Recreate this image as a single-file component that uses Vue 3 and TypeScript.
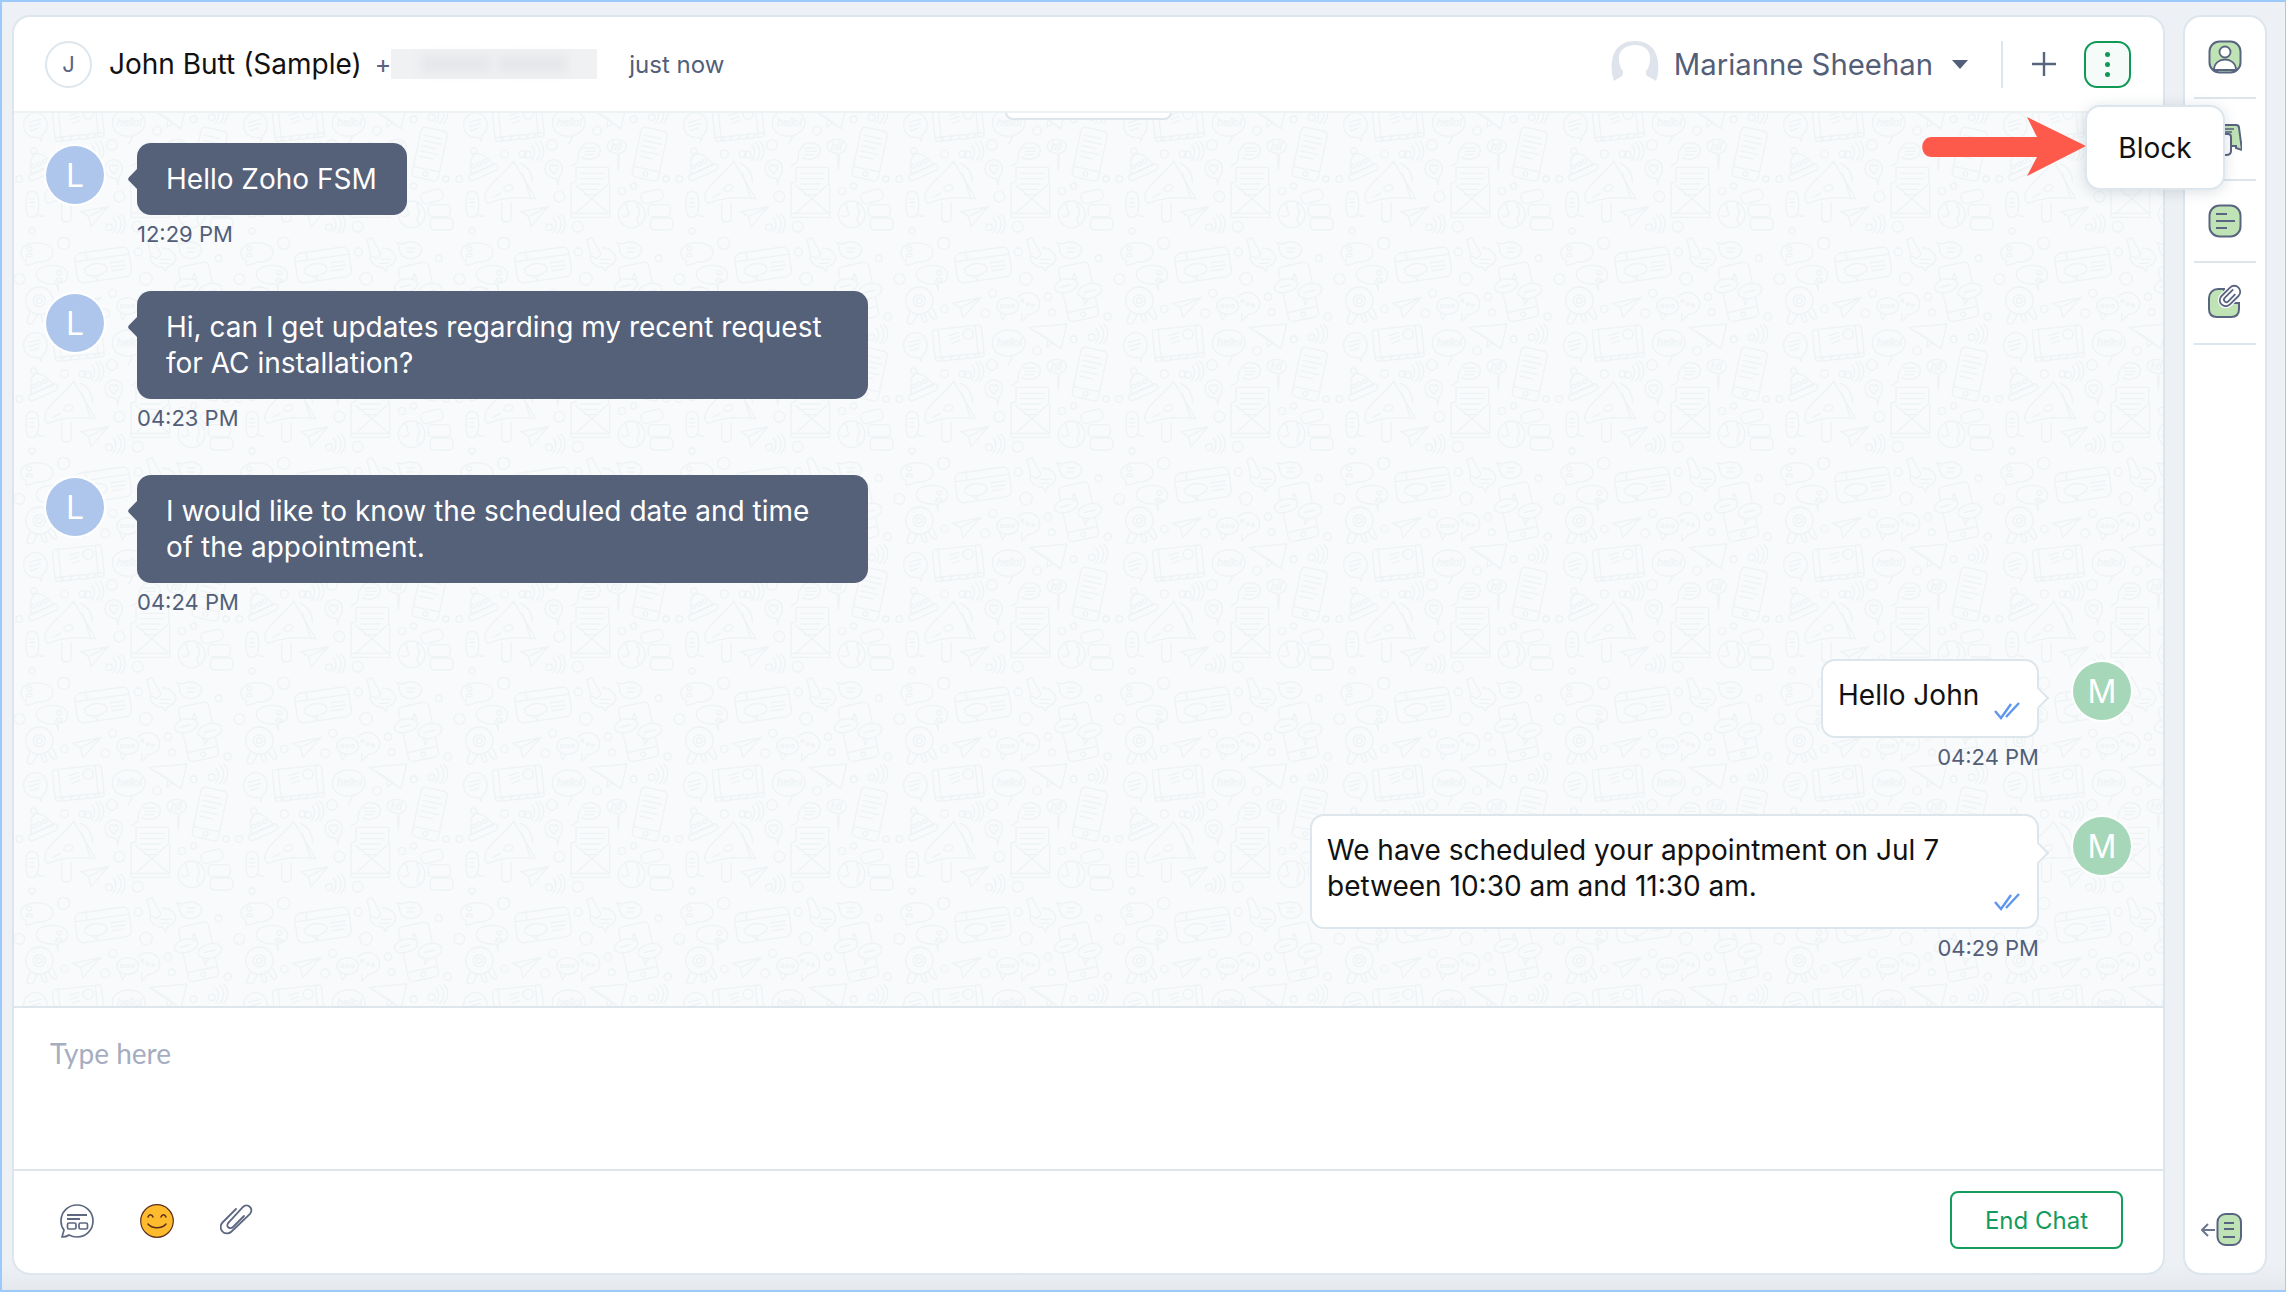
<script setup lang="ts">
interface Message {
  id: number
  side: 'in' | 'out'
  text: string
  time: string
  initial: string
  bubbleClass: string
}

const messages: Message[] = [
  { id: 1, side: 'in', text: 'Hello Zoho FSM', time: '12:29 PM', initial: 'L', bubbleClass: '' },
  {
    id: 2,
    side: 'in',
    text: 'Hi, can I get updates regarding my recent request\nfor AC installation?',
    time: '04:23 PM',
    initial: 'L',
    bubbleClass: 'wide',
  },
  {
    id: 3,
    side: 'in',
    text: 'I would like to know the scheduled date and time\nof the appointment.',
    time: '04:24 PM',
    initial: 'L',
    bubbleClass: 'wide',
  },
  { id: 4, side: 'out', text: 'Hello John', time: '04:24 PM', initial: 'M', bubbleClass: 'short' },
  {
    id: 5,
    side: 'out',
    text: 'We have scheduled your appointment on Jul 7\nbetween 10:30 am and 11:30 am.',
    time: '04:29 PM',
    initial: 'M',
    bubbleClass: 'long',
  },
]

// small circles of the wallpaper tile: x, y, r
const dots: [number, number, number][] = [
  [518, 118, 10], [408, 152, 13], [130, 222, 12], [185, 222, 10], [273, 195, 16], [295, 350, 16],
  [483, 333, 11], [518, 318, 9], [615, 297, 9], [655, 297, 10], [350, 440, 16], [33, 453, 9],
  [128, 490, 18], [352, 516, 12], [375, 596, 19], [593, 535, 10], [655, 597, 16], [130, 687, 11],
  [275, 640, 12], [253, 700, 13], [441, 650, 11], [452, 697, 10], [620, 710, 11],
]
</script>

<template>
  <div class="page">
    <main class="panel">
      <header class="head">
        <span class="contact-avatar">J</span>
        <span class="contact-name">John Butt (Sample)</span>
        <span class="plus-sign">+</span>
        <span class="blurred"><i></i><i></i></span>
        <span class="last-seen">just now</span>

        <div class="head-right">
          <svg class="agent-pic" viewBox="0 0 48 40">
            <path d="M3 40C-2 26-1 0 24 0s26 26 21 40c-2-2-6-3-9-5-1-2-1-3-1-5 3-3 4-8 4-13 0-8-6-13-15-13S8 9 8 17c0 5 1 10 4 13 0 2 0 3-1 5-2 2-6 3-8 5z" fill="#dfe3ec" />
          </svg>
          <span class="agent-name">Marianne Sheehan</span>
          <span class="caret"></span>
          <span class="divider"></span>
          <svg class="plus-icon" viewBox="0 0 26 26">
            <path d="M13 1v24M1 13h24" stroke="#596480" stroke-width="2.4" fill="none" />
          </svg>
          <button class="kebab" type="button">
            <i></i><i></i><i></i>
          </button>
        </div>
      </header>

      <section class="chat">
        <svg class="wallpaper" width="100%" height="100%">
          <defs>
            <g id="tile-art" fill="none" stroke="#eef3f5" stroke-width="4" stroke-linecap="round" stroke-linejoin="round">
              <circle v-for="(d, i) in dots" :key="i" :cx="d[0]" :cy="d[1]" :r="d[2]" />
              <!-- postcard -->
              <g transform="rotate(-6 170 130)">
                <rect x="98" y="82" width="148" height="96" rx="10" />
                <path d="M116 82v96M228 82v96M98 166h148M116 178l12-12M140 178l12-12M164 178l12-12M188 178l12-12M212 178l12-12" />
                <circle cx="204" cy="106" r="15" />
                <path d="M146 104l30-6M150 116l26-6M154 128l24-6" />
              </g>
              <!-- bubbles, top row -->
              <path d="M60 184c-2-8-4-12-8-12-24 4-44-12-44-36 0-22 16-38 36-38s34 16 34 38c0 16-8 26-14 30-2 6-2 12-4 18z" />
              <path d="M22 128l36-10M24 140l34-10M28 152l24-8" />
              <path d="M322 192c6-6 10-14 10-24-36 4-58-14-58-40 0-22 22-38 50-38s48 16 48 38c0 20-18 34-38 40-2 10-6 18-12 24z" />
              <text x="288" y="138" class="pat-word">hello!</text>
              <path d="M385 82l112-10-17 74-40-30zM385 82l95 64M440 116l-2 26 18-14" />
              <g id="wifi-mark">
                <circle cx="572" cy="112" r="10" />
                <path d="M584 84c12 10 12 30 0 44M596 76c16 14 16 40 0 54M608 72c16 16 16 42 0 58" />
              </g>
              <g transform="rotate(12 565 222)">
                <rect x="526" y="146" width="80" height="152" rx="12" />
                <path d="M526 268h80M538 170h50M538 186h56M538 202h44M538 218h54M538 234h40" />
                <circle cx="566" cy="283" r="7" />
              </g>
              <!-- bell -->
              <g transform="rotate(-24 58 250)">
                <path d="M18 270c8-10 8-44 36-52 28 4 32 40 40 52z" />
                <rect x="8" y="268" width="94" height="20" rx="10" />
                <circle cx="55" cy="208" r="9" />
                <circle cx="36" cy="250" r="6" />
                <circle cx="54" cy="250" r="6" />
                <circle cx="72" cy="250" r="6" />
              </g>
              <use href="#wifi-mark" transform="translate(-372 112)" />
              <path d="M290 315c0-12-4-18-8-20-18-2-30-12-30-28 0-16 12-28 26-28s26 12 26 28c0 12-6 20-10 26-2 8-2 14-4 22z" />
              <path d="M278 282c-10-10-16-16-12-24 4-6 10-4 12 2 2-6 8-8 12-2 4 8-4 14-12 24z" />
              <path d="M330 258c10-4 18-10 22-18-4-20 12-52 34-52 20 0 32 10 32 24s-14 26-32 26c-8 0-16-2-22-6" />
              <path d="M368 204h34M372 214h32M372 224h26" />
              <path d="M472 270c-2-16-2-34-2-50-26-2-32-12-32-22 0-10 12-20 30-20s28 10 28 20c0 10-8 20-20 22-2 16-2 34-4 50z" />
              <text x="450" y="210" class="pat-word">hi!</text>
              <!-- megaphone -->
              <path d="M72 350c0-30 50-60 86-106l66 112c-50-6-104-2-144 14-6-4-8-12-8-20zM178 250c22 10 36 30 36 56M184 280l26 76" />
              <ellipse cx="142" cy="324" rx="14" ry="9" transform="rotate(-20 142 324)" />
              <path d="M96 352l22-12M122 368v46c0 16 28 16 28 0v-46" />
              <!-- envelope -->
              <path d="M330 412V310l15-6v-42h98v46l3 4v100zM330 400h116M344 400l100-90M344 316l100 84" />
              <path d="M358 280h72M358 296h72M358 312h60M358 328h52M370 344h40" />
              <path d="M33 334c14 0 20 8 20 38 0 30-6 40-20 40s-18-10-18-40c0-30 4-38 18-38zM53 404c4 6 10 6 16 4M26 356h14M26 368h14M26 380h14" />
              <path d="M180 395l82-15-52 60-8-30zM180 395l82-15M202 410l60-30" />
              <use href="#wifi-mark" transform="translate(-308 330)" />
              <!-- globe -->
              <circle cx="512" cy="403" r="40" />
              <path d="M490 370c14 8 4 18 12 26s-14 20-20 10M530 368c-8 16 12 18 4 34s-8 22 2 30" />
              <rect x="540" y="332" width="66" height="34" rx="14" transform="rotate(-14 573 349)" />
              <rect x="562" y="374" width="66" height="36" rx="12" />
              <rect x="568" y="414" width="68" height="36" rx="12" />
              <!-- bottom half -->
              <path d="M16 556l-2-16c-10-4-14-14-14-22 0-18 22-30 48-30s48 12 48 30-22 30-48 28c-10 6-20 8-32 10z" />
              <circle cx="25" cy="506" r="7" />
              <path d="M16 530c0-12 18-12 18 0z" />
              <path d="M112 632l-6-20c-30 2-60-8-60-28 0-18 22-28 48-28s46 12 46 28c0 16-14 24-28 26z" />
              <circle cx="115" cy="578" r="7" />
              <path d="M104 604c0-12 20-12 20 0z" />
              <g transform="rotate(-8 245 553)">
                <rect x="164" y="510" width="164" height="90" rx="20" />
                <path d="M164 534h164M200 510v24" />
                <ellipse cx="222" cy="566" rx="34" ry="18" />
                <path d="M210 584l14 14 0-14M270 552h42M270 564h42M270 576h36" />
              </g>
              <path d="M378 480l14-8 28 50-12 14-18-8zM388 526c-4 20 14 36 38 36l8 14 4-14c14-6 26-16 26-28 0-16-18-30-40-30" />
              <path d="M420 538h30M416 550h28" />
              <path d="M466 488l18 4c6-4 14-6 24-6 18 0 34 10 34 24s-16 26-34 26-32-12-32-26c0-8-2-16-10-22zM498 504h24M498 516h20" />
              <!-- phone with bubbles -->
              <g transform="rotate(-12 530 633)">
                <rect x="486" y="552" width="92" height="168" rx="14" />
                <path d="M486 690h92" />
                <circle cx="532" cy="705" r="7" />
              </g>
              <ellipse cx="495" cy="617" rx="36" ry="20" transform="rotate(-14 495 617)" fill="#f8fafb" />
              <ellipse cx="567" cy="633" rx="36" ry="22" transform="rotate(-14 567 633)" fill="#f8fafb" />
              <path d="M478 622l30-8M550 638l32-8M510 598c6-2 8-8 8-18 6 6 8 14 8 24M548 652l4 22 10-18" />
              <!-- webcam -->
              <circle cx="55" cy="662" r="41" />
              <circle cx="55" cy="662" r="18" />
              <circle cx="55" cy="662" r="8" />
              <path d="M28 694l-10 30c0 8 14 10 18 4l14-26M60 704l4 18c2 6 12 6 14 0l-8-22M80 694l16 22c6 6 14-2 10-8l-10-22" />
              <path d="M155 670l85-18-54 60-8-30zM155 670l85-18M176 684l64-32" />
              <ellipse cx="320" cy="678" rx="33" ry="25" />
              <path d="M298 700l6 20 12-16" />
              <circle cx="304" cy="678" r="5" />
              <circle cx="320" cy="678" r="5" />
              <circle cx="336" cy="678" r="5" />
              <path d="M352 650c8-8 18-12 28-12 20 0 36 14 36 34 0 18-14 30-34 32l-20 20 0-24" />
              <circle cx="364" cy="662" r="4" />
              <circle cx="380" cy="672" r="4" />
              <circle cx="396" cy="676" r="4" />
            </g>
            <pattern id="chat-tile" patternUnits="userSpaceOnUse" width="220" height="220" x="7" y="187">
              <g transform="scale(0.33333)">
                <use href="#tile-art" />
                <use href="#tile-art" y="-660" />
                <use href="#tile-art" x="-660" />
                <use href="#tile-art" x="660" />
              </g>
            </pattern>
          </defs>
          <rect width="100%" height="100%" fill="url(#chat-tile)" />
        </svg>

        <span class="day-chip"></span>

        <div
          v-for="m in messages"
          :key="m.id"
          class="row"
          :class="m.side"
        >
          <span class="avatar" :class="m.side">{{ m.initial }}</span>
          <div class="msg">
            <div class="bubble" :class="[m.side, m.bubbleClass]">
              {{ m.text }}
              <svg v-if="m.side === 'out'" class="ticks" viewBox="0 0 27 18">
                <path d="M1 9l6 7L17 2M12 15L25 1" fill="none" stroke="#5e97ec" stroke-width="2.400" />
              </svg>
            </div>
            <div class="time">{{ m.time }}</div>
          </div>
        </div>
      </section>

      <div class="composer">Type here</div>

      <footer class="foot">
        <div class="tools">
          <svg class="tool" viewBox="0 0 34 34" fill="none" stroke="#5d6880" stroke-width="1.700">
            <path d="M2 33l2-7C1.800 23.400 1 20.500 1 17 1 8 8 1 17 1s16 7 16 16-7 16-16 16c-3 0-5.500-.6-8-2-2 1.500-4 2-7 2z" />
            <path d="M7 11h20M7 15h13" stroke-width="2" />
            <rect x="7.500" y="19" width="8.500" height="6" rx="1.500" />
            <rect x="19" y="19" width="8.500" height="6" rx="1.500" />
          </svg>
          <svg class="tool" viewBox="0 0 34 34" fill="none">
            <circle cx="17" cy="17" r="16.300" fill="#fdbb2d" stroke="#5a2f1d" stroke-width="1.200" />
            <path d="M8 13c1-3 4-3 5 0M21 13c1-3 4-3 5 0M8 20c4 5 14 5 18 0" stroke="#5a2f1d" stroke-width="1.500" stroke-linecap="round" />
          </svg>
          <svg class="tool" viewBox="0 0 34 34" fill="none" stroke="#5d6880" stroke-width="1.800" stroke-linecap="round">
            <path d="M16 5L3 18c-3 3-3 6-1 9s7 3 9 1L30 10c2-3 2-5 0-7s-5-2-7 0L9 18c-2 2-2 4-1 5s3 2 5 0L24 12" />
          </svg>
        </div>
        <button class="end-chat" type="button">End Chat</button>
      </footer>
    </main>

    <aside class="side">
      <div class="side-item">
        <svg class="side-icon" viewBox="0 0 34 34">
          <rect x="1.500" y="1.500" width="31" height="31" rx="10" fill="#bfe3b4" stroke="#596480" stroke-width="2" />
          <circle cx="17" cy="12" r="5.500" fill="#fff" stroke="#596480" stroke-width="1.800" />
          <path d="M6 30c0-14 22-14 22 0z" fill="#fff" stroke="#596480" stroke-width="1.800" />
        </svg>
      </div>
      <div class="side-item">
        <svg class="side-icon" viewBox="0 0 34 34">
          <path d="M8 3h20c2 0 3 1 3 3l3 22-6-2v-2H8z" fill="#bfe3b4" stroke="#596480" stroke-width="2" />
          <path d="M6 12h14c2 0 3 1 3 3v14c0 3-2 4-5 4H8c-3 0-4-2-4-4V15c0-2 1-3 2-3z" fill="#fff" stroke="#596480" stroke-width="2" />
          <path d="M12 7h14M12 10h12" stroke="#596480" stroke-width="1.600" />
        </svg>
      </div>
      <div class="side-item">
        <svg class="side-icon" viewBox="0 0 34 34">
          <rect x="1.500" y="1.500" width="31" height="31" rx="10" fill="#bfe3b4" stroke="#596480" stroke-width="2" />
          <path d="M8 10h11M8 17h19M8 24h11" stroke="#596480" stroke-width="1.800" />
        </svg>
      </div>
      <div class="side-item">
        <svg class="side-icon wide-icon" viewBox="0 0 37 36">
          <path d="M10 7h6v14h15v6c0 5-3 8-8 8H9c-5 0-8-3-8-8V16c0-5 4-9 9-9z" fill="#bfe3b4" stroke="#596480" stroke-width="2" />
          <g transform="rotate(-45 22 14)">
            <rect x="8" y="6" width="28" height="16" rx="8" fill="#fff" />
            <rect x="10" y="8" width="24" height="12" rx="6" fill="#fff" stroke="#596480" stroke-width="1.800" />
            <path d="M29 11.500H17a2.500 2.500 0 0 0 0 5h10" fill="none" stroke="#596480" stroke-width="1.800" />
          </g>
        </svg>
      </div>
      <svg class="collapse" viewBox="0 0 41 33">
        <path d="M14 17H1M7 11l-6 6 6 6" fill="none" stroke="#6d7690" stroke-width="2" />
        <rect x="16.500" y="1" width="23.500" height="31" rx="8" fill="#bfe3b4" stroke="#596480" stroke-width="2" />
        <path d="M23 10h10M23 16h10M22 24h12" stroke="#596480" stroke-width="1.800" />
      </svg>
    </aside>

    <div class="block-menu">Block</div>
    <svg class="pointer" viewBox="0 0 164 59">
      <path d="M105 0l59 29-59 30 10-19H10C-3 40-3 20 10 20h105z" fill="#fd5a4b" />
    </svg>
  </div>
</template>

<style>
html,
body {
  margin: 0;
  background: #edf0f4;
}
</style>

<style scoped>
.page {
  position: relative;
  width: 2286px;
  height: 1292px;
  box-sizing: border-box;
  display: flex;
  gap: 18px;
  padding: 13px 18px 15px 10px;
  border: solid #9ccbfb;
  border-width: 2px 1px 2px 2px;
  background: linear-gradient(#edf0f4 98%, #e5e8ed);
  font-family: Inter, 'Noto Sans', sans-serif;
  color: #111;
}

.panel {
  flex: 1;
  display: flex;
  flex-direction: column;
  min-width: 0;
  border: 2px solid #dde6ec;
  border-radius: 18px;
  background: #fff;
  overflow: hidden;
}

.head {
  height: 96px;
  flex-shrink: 0;
  box-sizing: border-box;
  display: flex;
  align-items: center;
  padding: 0 32px 0 31px;
  border-bottom: 2px solid #edf2f4;
}

.contact-avatar {
  width: 47px;
  height: 47px;
  box-sizing: border-box;
  display: flex;
  align-items: center;
  justify-content: center;
  border: 2px solid #dde6ec;
  border-radius: 50%;
  font-size: 22px;
  color: #596480;
}

.contact-name {
  margin-left: 17px;
  font-size: 28px;
}

.plus-sign {
  margin-left: 13px;
  font-size: 25px;
  color: #596480;
}

.blurred {
  width: 206px;
  height: 30px;
  margin-left: 0;
  display: flex;
  align-items: center;
  gap: 8px;
  padding: 0 30px;
  box-sizing: border-box;
  background: #f0f1f3;
}

.blurred i {
  flex: 1;
  height: 18px;
  background: #e6e7ea;
  filter: blur(5px);
}

.last-seen {
  margin-left: 32px;
  font-size: 24px;
  color: #535e78;
}

.head-right {
  margin-left: auto;
  display: flex;
  align-items: center;
}

.agent-pic {
  width: 48px;
  height: 40px;
  margin-top: -7px;
}

.agent-name {
  margin-left: 15px;
  font-size: 29.300px;
  color: #535e78;
}

.caret {
  width: 0;
  height: 0;
  margin-left: 19px;
  border: solid transparent;
  border-width: 9px 8px 0;
  border-top-color: #535e78;
}

.divider {
  width: 2px;
  height: 47px;
  margin-left: 33px;
  background: #dde6ec;
}

.plus-icon {
  width: 26px;
  height: 26px;
  margin-left: 28px;
}

.kebab {
  width: 47px;
  height: 47px;
  margin-left: 27px;
  padding: 0;
  box-sizing: border-box;
  display: flex;
  flex-direction: column;
  align-items: center;
  justify-content: center;
  gap: 5px;
  border: 2px solid #0e9a55;
  border-radius: 13px;
  background: #f5fbf8;
}

.kebab i {
  width: 5px;
  height: 5px;
  border-radius: 50%;
  background: #0e9a55;
}

.chat {
  position: relative;
  flex: 1;
  min-height: 0;
  padding: 30px 32px 0;
  background: #f8fafb;
  overflow: hidden;
}

.wallpaper {
  position: absolute;
  inset: 0;
}

.pat-word {
  font-family: 'Liberation Sans', sans-serif;
  font-style: italic;
  font-size: 32px;
  stroke-width: 2;
}

.day-chip {
  position: absolute;
  top: -23px;
  left: 991px;
  width: 167px;
  height: 30px;
  box-sizing: border-box;
  border: 2px solid #dde6ec;
  border-radius: 8px;
  background: #fff;
}

.row {
  position: relative;
  display: flex;
  gap: 33px;
  margin-bottom: 43px;
}

.row.out {
  flex-direction: row-reverse;
  gap: 34px;
}

.avatar {
  width: 58px;
  height: 58px;
  flex-shrink: 0;
  margin-top: 3px;
  display: flex;
  align-items: center;
  justify-content: center;
  border-radius: 50%;
  box-shadow: 0 0 0 2px #fff;
  font-size: 32px;
  color: #fff;
}

.avatar.in {
  background: #aec6ec;
}

.avatar.out {
  background: #a6d7b8;
}

.msg {
  display: flex;
  flex-direction: column;
}

.row.out .msg {
  align-items: flex-end;
}

.bubble {
  position: relative;
  box-sizing: border-box;
  padding: 18px 30px 18px 29px;
  border-radius: 14px;
  font-size: 28px;
  line-height: 36px;
  white-space: pre-line;
}

.bubble::before {
  content: '';
  position: absolute;
  top: 29px;
  width: 14px;
  height: 14px;
  transform: rotate(45deg);
  background: inherit;
}

.bubble.in {
  background: #556079;
  color: #fff;
}

.bubble.in::before {
  left: -7px;
  border-radius: 0 0 0 3px;
}

.bubble.out {
  padding: 16px 40px 23px 15px;
  border: 2px solid #dde6ec;
  background: #fff;
  color: #111;
}

.bubble.out::before {
  right: -9px;
  border: solid #dde6ec;
  border-width: 2px 2px 0 0;
}

.wide {
  width: 731px;
}

.short {
  width: 218px;
  white-space: nowrap;
}

.long {
  width: 729px;
}

.ticks {
  position: absolute;
  right: 16px;
  bottom: 16px;
  width: 27px;
  height: 18px;
}

.time {
  height: 28px;
  margin-top: 5px;
  font-size: 22px;
  line-height: 28px;
  color: #535e78;
}

.composer {
  height: 163px;
  flex-shrink: 0;
  box-sizing: border-box;
  padding: 28px 36px;
  border-top: 2px solid #dde6ec;
  font-family: Lato, sans-serif;
  font-size: 28px;
  line-height: 34px;
  color: #a6adbf;
}

.foot {
  height: 104px;
  flex-shrink: 0;
  box-sizing: border-box;
  display: flex;
  align-items: center;
  justify-content: space-between;
  padding: 0 40px 4px 46px;
  border-top: 2px solid #dde6ec;
}

.tools {
  display: flex;
  gap: 46px;
  padding-top: 2px;
}

.tool {
  width: 34px;
  height: 34px;
}

.end-chat {
  width: 173px;
  height: 58px;
  padding: 0;
  border: 2px solid #149c5e;
  border-radius: 8px;
  background: #fff;
  font: 24px Inter, sans-serif;
  color: #149c5e;
}

.side {
  width: 84px;
  flex-shrink: 0;
  box-sizing: border-box;
  display: flex;
  flex-direction: column;
  padding: 0 9px;
  border: 2px solid #dde6ec;
  border-radius: 18px;
  background: #fff;
}

.side-item {
  height: 82px;
  display: flex;
  align-items: center;
  justify-content: center;
  border-bottom: 2px solid #dde6ec;
  box-sizing: border-box;
}

.side-icon {
  width: 34px;
  height: 34px;
}

.wide-icon {
  width: 37px;
  height: 36px;
  margin: -6px 0 0 3px;
}

.collapse {
  width: 41px;
  height: 33px;
  margin: auto 0 27px 7px;
}

.block-menu {
  position: absolute;
  top: 103px;
  left: 2083px;
  width: 140px;
  height: 85px;
  box-sizing: border-box;
  display: flex;
  align-items: center;
  justify-content: center;
  border: 2px solid #dde6ec;
  border-radius: 15px;
  background: #fff;
  box-shadow: 0 2px 14px rgba(60, 80, 100, 0.18);
  font-size: 28px;
  color: #111;
}

.pointer {
  position: absolute;
  top: 115px;
  left: 1920px;
  width: 164px;
  height: 59px;
}
</style>
